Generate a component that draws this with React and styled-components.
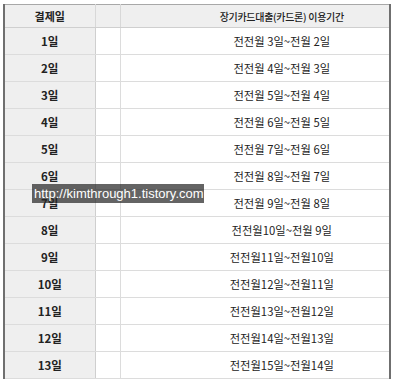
import React from 'react';
import styled, { createGlobalStyle } from 'styled-components';

const GlobalStyle = createGlobalStyle`
  html, body {
    margin: 0;
    padding: 0;
    background: #fff;
  }
  body {
    font-family: "Noto Sans CJK KR", "Noto Sans", sans-serif;
  }
`;

const Page = styled.div`
  position: relative;
  padding: 4px 0 0 3px;
  width: 394px;
  height: 381px;
  box-sizing: border-box;
  overflow: hidden;
`;

const Table = styled.table`
  width: 388px;
  border-collapse: collapse;
  table-layout: fixed;
  border-left: 2px solid #6f6f6f;
  border-right: 2px solid #6f6f6f;
  border-top: 1px solid #a8a8a8;
  color: #222;
`;

const HeadCell = styled.th`
  height: 22px;
  padding: 0 0 0 ${(p) => p.$shift || '0'};
  background: #efefef;
  border-right: 1px solid #d8d8d8;
  border-bottom: 1px solid #cfcfcf;
  font-size: ${(p) => (p.$small ? '10px' : '11px')};
  font-weight: ${(p) => (p.$small ? 500 : 700)};
  letter-spacing: ${(p) => (p.$small ? '-0.3px' : '0')};
  text-align: center;
  vertical-align: middle;
  white-space: nowrap;
`;

const DayCell = styled.td`
  height: 26px;
  padding: 0;
  background: #efefef;
  border-right: 1px solid #cfcfcf;
  border-bottom: 1px solid #dcdcdc;
  font-size: 11.5px;
  font-weight: 700;
  text-align: center;
  vertical-align: middle;
`;

const BlankCell = styled.td`
  padding: 0;
  border-right: 1px solid #dcdcdc;
  border-bottom: 1px solid #dcdcdc;
`;

const PeriodCell = styled.td`
  padding: 0 0 0 54px;
  border-right: 1px solid #e4e4e4;
  border-bottom: 1px solid #dcdcdc;
  font-size: 11.3px;
  text-align: center;
  vertical-align: middle;
  white-space: nowrap;
`;

const Watermark = styled.div`
  position: absolute;
  left: 32px;
  top: 184px;
  width: 172px;
  height: 19px;
  background: rgba(40, 40, 40, 0.72);
  color: #fff;
  font-family: "Liberation Sans", Arial, sans-serif;
  font-size: 13px;
  line-height: 19px;
  padding-left: 2px;
  box-sizing: border-box;
  white-space: nowrap;
`;

const rows = Array.from({ length: 13 }, (_, i) => {
  const day = i + 1;
  const from = day + 2;
  const to = day + 1;
  const pad = (n) => (n < 10 ? ' ' + n : String(n));
  return { day, period: `전전월${pad(from)}일~전월${pad(to)}일` };
});

export default function App() {
  return (
    <>
      <GlobalStyle />
      <Page>
        <Table>
          <colgroup>
            <col style={{ width: 91 }} />
            <col style={{ width: 25 }} />
            <col />
          </colgroup>
          <thead>
            <tr>
              <HeadCell>결제일</HeadCell>
              <HeadCell />
              <HeadCell $small $shift="54px">장기카드대출(카드론) 이용기간</HeadCell>
            </tr>
          </thead>
          <tbody>
            {rows.map((r) => (
              <tr key={r.day}>
                <DayCell>{r.day}일</DayCell>
                <BlankCell />
                <PeriodCell>{r.period}</PeriodCell>
              </tr>
            ))}
          </tbody>
        </Table>
        <Watermark>http://kimthrough1.tistory.com</Watermark>
      </Page>
    </>
  );
}
